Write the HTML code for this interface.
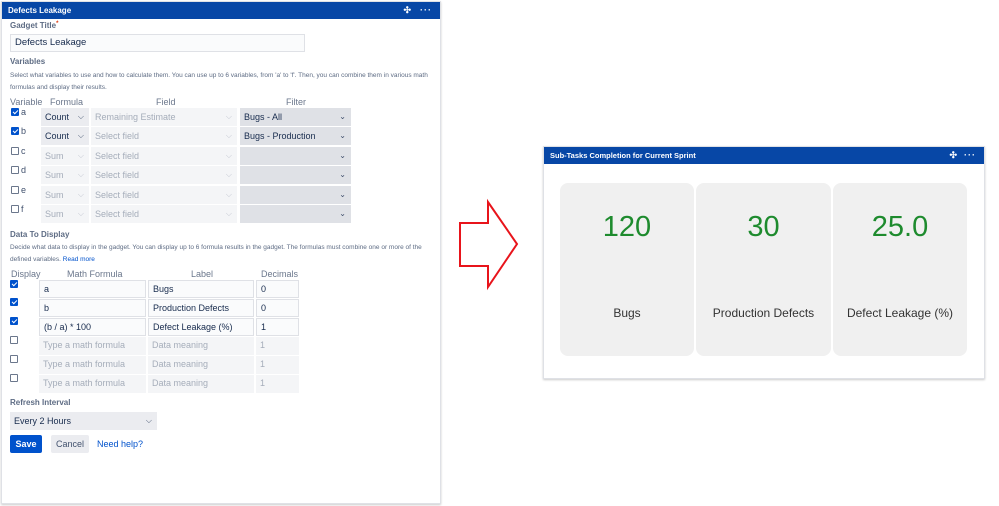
<!DOCTYPE html>
<html><head><style>
*{box-sizing:border-box;margin:0;padding:0}
body{width:999px;height:506px;background:#fff;font-family:"Liberation Sans",sans-serif;position:relative;overflow:hidden;color:#172b4d}
.a{position:absolute}
.panel{left:1px;top:1px;width:440px;height:503px;border:1px solid #dfe1e6;background:#fff;box-shadow:0 1px 2px #ccc}
.hdr{background:#0747a6;color:#fff;font-weight:bold;font-size:8px;height:17px;line-height:17px;padding-left:6px}
.ic{color:#fff;font-size:9px;position:absolute;top:0;letter-spacing:1px}
.lbl{font-size:8px;font-weight:bold;color:#5e6c84}
.desc{font-size:6.5px;color:#5e6c84;line-height:11.5px}
.th{font-size:9px;color:#6b778c}
.in{position:absolute;height:18px;border:1px solid #dfe1e6;background:#fafbfc;font-size:9px;line-height:16px;padding-left:4px;color:#172b4d}
.sel{position:absolute;height:18px;background:#ebecf0;font-size:9px;line-height:18px;padding-left:4px}
.dis{background:#f4f5f7;color:#a5adba;border:none}
.chev{position:absolute;right:5px;top:0;font-size:8px;color:#42526e}
.cb{position:absolute;width:8px;height:8px;border:1px solid #6b778c;border-radius:1px;background:#fff}
.cb.on{background:#0052cc;border-color:#0052cc}
.cb.on:after{content:"";position:absolute;left:2px;top:0;width:2px;height:4px;border:solid #fff;border-width:0 1.2px 1.2px 0;transform:rotate(45deg)}
.card{position:absolute;top:183px;height:173px;background:#f0f0f0;border-radius:8px;text-align:center}
.num{position:absolute;left:0;right:0;top:28px;font-size:29px;color:#1e8b2e}
.cl{position:absolute;left:0;right:0;top:123px;font-size:12px;color:#333}
</style></head><body>
<div class="a panel">
<div class="hdr">Defects Leakage<span class="ic" style="right:28px">✣</span><span class="ic" style="right:8px">···</span></div>
</div>
<div class="a lbl" style="left:10px;top:21px">Gadget Title<span style="color:#de350b;font-size:6px;vertical-align:top">*</span></div>
<div class="in" style="left:10px;top:34px;width:295px;height:18px;font-size:9.5px">Defects Leakage</div>
<div class="a lbl" style="left:10px;top:57px">Variables</div>
<div class="a desc" style="left:10px;top:70px;width:420px">Select what variables to use and how to calculate them. You can use up to 6 variables, from 'a' to 'f'. Then, you can combine them in various math formulas and display their results.</div>
<div class="a th" style="left:10px;top:97px">Variable</div>
<div class="a th" style="left:50px;top:97px">Formula</div>
<div class="a th" style="left:156px;top:97px">Field</div>
<div class="a th" style="left:286px;top:97px">Filter</div>

<div class="cb on" style="left:11px;top:108px"></div><div class="a th" style="left:21px;top:107px;color:#42526e">a</div>
<div class="sel" style="left:41px;top:108px;width:48px">Count<span class="chev">⌵</span></div>
<div class="sel dis" style="left:91px;top:108px;width:146px">Remaining Estimate<span class="chev" style="color:#c1c7d0">⌵</span></div>
<div class="sel" style="left:240px;top:108px;width:111px;background:#dfe1e6">Bugs - All<span class="chev">⌄</span></div>

<div class="cb on" style="left:11px;top:127px"></div><div class="a th" style="left:21px;top:126px;color:#42526e">b</div>
<div class="sel" style="left:41px;top:127px;width:48px">Count<span class="chev">⌵</span></div>
<div class="sel dis" style="left:91px;top:127px;width:146px">Select field<span class="chev" style="color:#c1c7d0">⌵</span></div>
<div class="sel" style="left:240px;top:127px;width:111px;background:#dfe1e6">Bugs - Production<span class="chev">⌄</span></div>

<div class="cb" style="left:11px;top:147px"></div><div class="a th" style="left:21px;top:146px;color:#42526e">c</div>
<div class="sel dis" style="left:41px;top:147px;width:48px">Sum<span class="chev" style="color:#c1c7d0">⌵</span></div>
<div class="sel dis" style="left:91px;top:147px;width:146px">Select field<span class="chev" style="color:#c1c7d0">⌵</span></div>
<div class="sel" style="left:240px;top:147px;width:111px;background:#dfe1e6"><span class="chev">⌄</span></div>

<div class="cb" style="left:11px;top:166px"></div><div class="a th" style="left:21px;top:165px;color:#42526e">d</div>
<div class="sel dis" style="left:41px;top:166px;width:48px">Sum<span class="chev" style="color:#c1c7d0">⌵</span></div>
<div class="sel dis" style="left:91px;top:166px;width:146px">Select field<span class="chev" style="color:#c1c7d0">⌵</span></div>
<div class="sel" style="left:240px;top:166px;width:111px;background:#dfe1e6"><span class="chev">⌄</span></div>

<div class="cb" style="left:11px;top:186px"></div><div class="a th" style="left:21px;top:185px;color:#42526e">e</div>
<div class="sel dis" style="left:41px;top:186px;width:48px">Sum<span class="chev" style="color:#c1c7d0">⌵</span></div>
<div class="sel dis" style="left:91px;top:186px;width:146px">Select field<span class="chev" style="color:#c1c7d0">⌵</span></div>
<div class="sel" style="left:240px;top:186px;width:111px;background:#dfe1e6"><span class="chev">⌄</span></div>

<div class="cb" style="left:11px;top:205px"></div><div class="a th" style="left:21px;top:204px;color:#42526e">f</div>
<div class="sel dis" style="left:41px;top:205px;width:48px">Sum<span class="chev" style="color:#c1c7d0">⌵</span></div>
<div class="sel dis" style="left:91px;top:205px;width:146px">Select field<span class="chev" style="color:#c1c7d0">⌵</span></div>
<div class="sel" style="left:240px;top:205px;width:111px;background:#dfe1e6"><span class="chev">⌄</span></div>

<div class="a lbl" style="left:10px;top:230px">Data To Display</div>
<div class="a desc" style="left:10px;top:242px;width:425px">Decide what data to display in the gadget. You can display up to 6 formula results in the gadget. The formulas must combine one or more of the defined variables. <span style="color:#0052cc">Read more</span></div>
<div class="a th" style="left:11px;top:269px">Display</div>
<div class="a th" style="left:67px;top:269px">Math Formula</div>
<div class="a th" style="left:191px;top:269px">Label</div>
<div class="a th" style="left:261px;top:269px">Decimals</div>

<div class="cb on" style="left:10px;top:280px"></div>
<div class="in" style="left:39px;top:280px;width:107px">a</div><div class="in" style="left:148px;top:280px;width:106px">Bugs</div><div class="in" style="left:256px;top:280px;width:43px">0</div>
<div class="cb on" style="left:10px;top:298px"></div>
<div class="in" style="left:39px;top:299px;width:107px">b</div><div class="in" style="left:148px;top:299px;width:106px">Production Defects</div><div class="in" style="left:256px;top:299px;width:43px">0</div>
<div class="cb on" style="left:10px;top:317px"></div>
<div class="in" style="left:39px;top:318px;width:107px">(b / a) * 100</div><div class="in" style="left:148px;top:318px;width:106px">Defect Leakage (%)</div><div class="in" style="left:256px;top:318px;width:43px">1</div>
<div class="cb" style="left:10px;top:336px"></div>
<div class="in dis" style="left:39px;top:337px;width:107px">Type a math formula</div><div class="in dis" style="left:148px;top:337px;width:106px">Data meaning</div><div class="in dis" style="left:256px;top:337px;width:43px">1</div>
<div class="cb" style="left:10px;top:355px"></div>
<div class="in dis" style="left:39px;top:356px;width:107px">Type a math formula</div><div class="in dis" style="left:148px;top:356px;width:106px">Data meaning</div><div class="in dis" style="left:256px;top:356px;width:43px">1</div>
<div class="cb" style="left:10px;top:374px"></div>
<div class="in dis" style="left:39px;top:375px;width:107px">Type a math formula</div><div class="in dis" style="left:148px;top:375px;width:106px">Data meaning</div><div class="in dis" style="left:256px;top:375px;width:43px">1</div>

<div class="a lbl" style="left:10px;top:398px">Refresh Interval</div>
<div class="sel" style="left:10px;top:412px;width:147px;height:18px">Every 2 Hours<span class="chev">⌵</span></div>
<div class="a" style="left:10px;top:435px;width:32px;height:18px;background:#0052cc;color:#fff;font-weight:bold;font-size:9px;line-height:18px;text-align:center;border-radius:2px">Save</div>
<div class="a" style="left:51px;top:435px;width:38px;height:18px;background:#ebecf0;color:#42526e;font-size:9px;line-height:18px;text-align:center;border-radius:2px">Cancel</div>
<div class="a" style="left:97px;top:435px;color:#0052cc;font-size:9px;line-height:18px">Need help?</div>

<svg class="a" style="left:0;top:0" width="999" height="506"><polygon points="460,223 488,223 488,202 517,244 488,287 488,266 460,266" fill="#fff" stroke="#e8141b" stroke-width="2"/></svg>

<div class="a" style="left:543px;top:146px;width:442px;height:233px;border:1px solid #dfe1e6;background:#fff;box-shadow:0 1px 2px #ccc">
<div class="hdr" style="height:17px;line-height:17px;font-size:7.5px">Sub-Tasks Completion for Current Sprint<span class="ic" style="right:26px">✣</span><span class="ic" style="right:8px">···</span></div>
</div>
<div class="card" style="left:560px;width:134px"><div class="num">120</div><div class="cl">Bugs</div></div>
<div class="card" style="left:696px;width:135px"><div class="num">30</div><div class="cl">Production Defects</div></div>
<div class="card" style="left:833px;width:134px"><div class="num">25.0</div><div class="cl">Defect Leakage (%)</div></div>
</body></html>
